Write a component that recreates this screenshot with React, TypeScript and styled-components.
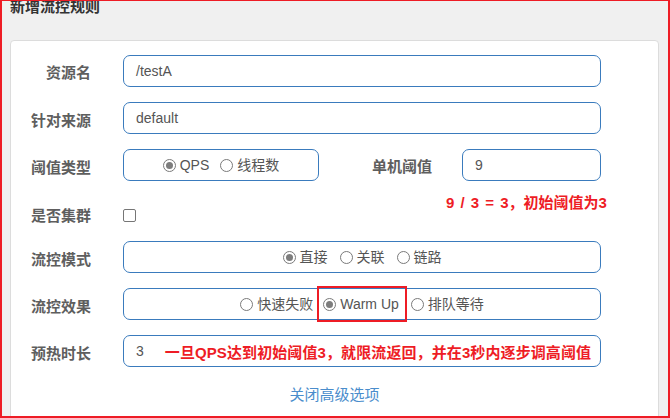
import React from "react";
import styled, { createGlobalStyle } from "styled-components";

const GlobalStyle = createGlobalStyle`
  html, body { margin: 0; padding: 0; background: #ffffff; }
  * { box-sizing: border-box; }
`;

const BLUE = "#3a7bbd";
const RED = "#ee1c25";
const LATIN = `"Liberation Sans", "Noto Sans CJK SC", sans-serif`;

const Frame = styled.div`
  width: 670px;
  height: 418px;
  overflow: hidden;
  background: #f0f0f0;
  border: 2px solid ${RED};
  border-top-width: 1px;
  font-family: ${LATIN};
`;

const Header = styled.div`
  height: 39px;
  display: flex;
  justify-content: space-between;
  align-items: flex-start;
  padding: 0 8px 0 8px;
`;

const Title = styled.h4`
  margin: -3px 0 0 0;
  font-size: 15px;
  line-height: 15px;
  font-weight: bold;
  color: #333;
  font-family: "Noto Sans CJK SC", sans-serif;
`;

const Close = styled.span`
  margin-top: -13px;
  font-size: 19px;
  line-height: 16px;
  color: #b5b5b5;
`;

const Card = styled.div`
  margin-left: 8px;
  width: 649px;
  background: #fff;
  border: 1px solid #dcdcdc;
  border-radius: 4px;
  padding: 14px 0 40px 0;
`;

const Row = styled.div<{ $tall?: boolean }>`
  display: grid;
  grid-template-columns: 80px 478px;
  column-gap: 32px;
  align-items: center;
  height: ${(p) => (p.$tall ? "30px" : "32px")};
  padding-top: ${(p) => (p.$tall ? "8px" : "0")};
  margin-bottom: 15px;
  position: relative;
`;

const Label = styled.label<{ $shift?: number }>`
  text-align: right;
  font-size: 15px;
  font-weight: bold;
  color: #5e5e5e;
  line-height: 20px;
  padding-top: ${(p) => p.$shift ?? 4}px;
  font-family: "Noto Sans CJK SC", sans-serif;
`;

const Field = styled.div`
  display: flex;
  align-items: center;
  height: 100%;
`;

const Input = styled.div<{ $grow?: boolean }>`
  display: flex;
  align-items: center;
  height: 32px;
  width: ${(p) => (p.$grow ? "auto" : "100%")};
  flex: ${(p) => (p.$grow ? "1" : "none")};
  border: 1px solid ${BLUE};
  border-radius: 7px;
  padding: 0 12px;
  font-size: 14px;
  color: #555;
  white-space: nowrap;
  overflow: visible;
`;

const RadioBox = styled.div<{ $width?: string; $gap?: number }>`
  display: flex;
  align-items: center;
  justify-content: center;
  gap: ${(p) => p.$gap ?? 12}px;
  height: 32px;
  width: ${(p) => p.$width ?? "100%"};
  border: 1px solid ${BLUE};
  border-radius: 7px;
  font-size: 14px;
  color: #555;
`;

const Option = styled.span<{ $marked?: boolean }>`
  display: inline-flex;
  align-items: center;
  gap: 4px;
  line-height: 18px;
  ${(p) =>
    p.$marked
      ? `height: 36px; border: 2px solid ${RED}; padding: 0 6px 0 4px;`
      : ""}
`;

const OptText = styled.span`
  font-family: ${LATIN};
`;

const Circle = styled.span<{ $on?: boolean }>`
  width: 13px;
  height: 13px;
  border-radius: 50%;
  border: 1px solid #7a7a7a;
  background: #fff;
  display: inline-flex;
  align-items: center;
  justify-content: center;
  flex: none;
  &::after {
    content: "";
    width: 7px;
    height: 7px;
    border-radius: 50%;
    background: ${(p) => (p.$on ? "#7d7d7d" : "transparent")};
  }
`;

const SubLabel = styled(Label)`
  width: 113px;
  flex: none;
  margin-right: 30px;
`;

const Check = styled.span`
  width: 13px;
  height: 13px;
  border: 1px solid #767676;
  border-radius: 2px;
  background: #fff;
`;

const Note = styled.span`
  color: ${RED};
  font-weight: bold;
  font-size: 15px;
  font-family: ${LATIN};
  white-space: nowrap;
`;

const FloatNote = styled(Note)`
  position: absolute;
  top: 0;
  left: 435px;
  line-height: 14px;
  word-spacing: 2px;
`;

const InlineNote = styled(Note)`
  margin-left: 21px;
  letter-spacing: 0.1px;
`;

const LinkRow = styled.div`
  text-align: center;
  line-height: 24px;
`;

const Link = styled.a`
  font-size: 15px;
  color: #4a8dcc;
  text-decoration: none;
  font-family: "Noto Sans CJK SC", sans-serif;
`;

type Opt = { text: string; on?: boolean; marked?: boolean };

const Radios: React.FC<{ opts: Opt[]; width?: string; gap?: number }> = ({ opts, width, gap }) => (
  <RadioBox $width={width} $gap={gap}>
    {opts.map((o) => (
      <Option key={o.text} $marked={o.marked}>
        <Circle $on={o.on} />
        <OptText>{o.text}</OptText>
      </Option>
    ))}
  </RadioBox>
);

export default function App() {
  return (
    <>
      <GlobalStyle />
      <Frame>
        <Header>
          <Title>新增流控规则</Title>
          <Close>×</Close>
        </Header>
        <Card>
          <Row>
            <Label $shift={2}>资源名</Label>
            <Input>/testA</Input>
          </Row>
          <Row>
            <Label>针对来源</Label>
            <Input>default</Input>
          </Row>
          <Row>
            <Label>阈值类型</Label>
            <Field>
              <Radios
                width="196px"
                gap={11}
                opts={[{ text: "QPS", on: true }, { text: "线程数" }]}
              />
              <SubLabel $shift={2}>单机阈值</SubLabel>
              <Input $grow>9</Input>
            </Field>
          </Row>
          <Row $tall>
            <Label $shift={0}>是否集群</Label>
            <Field>
              <Check />
            </Field>
            <FloatNote>9 / 3 = 3，初始阈值为3</FloatNote>
          </Row>
          <Row>
            <Label>流控模式</Label>
            <Radios
              gap={12}
              opts={[{ text: "直接", on: true }, { text: "关联" }, { text: "链路" }]}
            />
          </Row>
          <Row>
            <Label>流控效果</Label>
            <Radios
              gap={4}
              opts={[
                { text: "快速失败" },
                { text: "Warm Up", on: true, marked: true },
                { text: "排队等待" },
              ]}
            />
          </Row>
          <Row>
            <Label>预热时长</Label>
            <Input>
              3<InlineNote>一旦QPS达到初始阈值3，就限流返回，并在3秒内逐步调高阈值</InlineNote>
            </Input>
          </Row>
          <LinkRow>
            <Link href="#">关闭高级选项</Link>
          </LinkRow>
        </Card>
      </Frame>
    </>
  );
}
